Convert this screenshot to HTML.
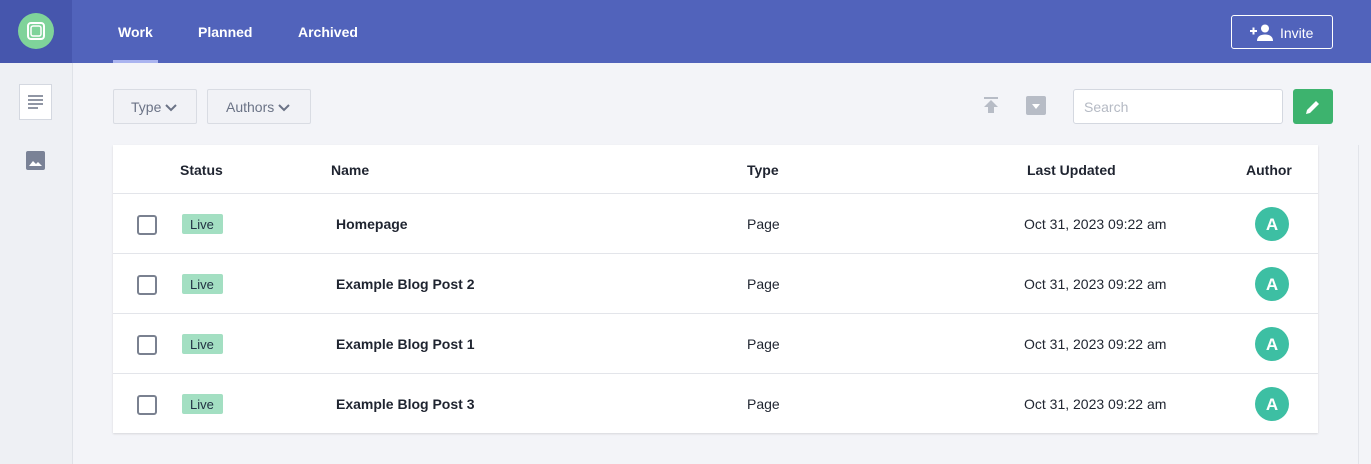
<!DOCTYPE html>
<html><head><style>
*{box-sizing:border-box;margin:0;padding:0}
body{width:1371px;height:464px;overflow:hidden;background:#f3f4f8;font-family:"Liberation Sans",sans-serif;position:relative;color:#1f2430}
.top{position:absolute;left:0;top:0;width:1371px;height:63px;background:#5163bb}
.logo{position:absolute;left:0;top:0;width:72px;height:63px;background:#4656ad}
.logo .c{position:absolute;left:18px;top:13px;width:36px;height:36px;border-radius:50%;background:#7fd39a}
.tab{position:absolute;top:24px;color:#fff;font-size:14px;font-weight:bold}
.ul{position:absolute;left:113px;top:60px;width:45px;height:3px;background:#aab4f0}
.invite{position:absolute;left:1231px;top:15px;width:102px;height:34px;border:1px solid #fff;border-radius:3px;color:#fff;font-size:14px;padding:9px 0 0 48px}
.side{position:absolute;left:0;top:63px;width:73px;height:401px;background:#eef0f4;border-right:1px solid #dfe2e8}
.doc{position:absolute;left:19px;top:84px;width:33px;height:36px;background:#fff;border:1px solid #d4d8e0}
.btn{position:absolute;top:89px;height:35px;border:1px solid #d9dce3;border-radius:2px;background:#f1f2f6;color:#6b7386;font-size:14px;padding-top:9px}
.search{position:absolute;left:1073px;top:89px;width:210px;height:35px;background:#fff;border:1px solid #d4d8e0;border-radius:3px;color:#b5bac4;font-size:14px;padding:9px 10px}
.edit{position:absolute;left:1293px;top:89px;width:40px;height:35px;background:#3db36e;border-radius:3px}
.card{position:absolute;left:113px;top:145px;width:1205px;height:288px;background:#fff;box-shadow:0 1px 2px rgba(0,0,0,.12)}
.vr{position:absolute;left:1358px;top:145px;width:1px;height:319px;background:#e2e4ea}
.th{position:absolute;top:162px;font-size:14px;font-weight:bold}
.row{position:absolute;left:113px;width:1205px;height:60px;border-top:1px solid #e3e5ea;font-size:14px}
.row span{position:absolute;top:22px}
.cb{position:absolute;left:24px;top:21px;width:20px;height:20px;border:2px solid #7a8190;border-radius:3px}
.live{position:absolute;left:69px;top:20px;width:41px;height:20px;background:#a3dfc2;border-radius:2px;font-size:13px;color:#234;padding:3px 0 0 8px}
.av{position:absolute;left:1142px;top:13px;width:34px;height:34px;border-radius:50%;background:#3dbfa3;color:#fff;font-weight:bold;font-size:17px;text-align:center;padding-top:8px}
</style></head><body>
<div class="top"></div>
<div class="logo"><div class="c"><svg width="36" height="36" viewBox="0 0 36 36"><rect x="10" y="10" width="16" height="16" rx="3" fill="none" stroke="#fff" stroke-width="2"/><rect x="13" y="13" width="10" height="10" rx="2" fill="none" stroke="#fff" stroke-width="1.5"/></svg></div></div>
<div class="tab" style="left:118px">Work</div>
<div class="tab" style="left:198px">Planned</div>
<div class="tab" style="left:298px">Archived</div>
<div class="ul"></div>
<div class="invite"><svg style="position:absolute;left:18px;top:8px" width="24" height="17" viewBox="0 0 24 17"><path d="M0 7h7M3.5 3.5v7" stroke="#fff" stroke-width="2"/><circle cx="15" cy="4.5" r="4" fill="#fff"/><path d="M7 17c0-5 4-6.5 8-6.5s8 1.5 8 6.5z" fill="#fff"/></svg>Invite</div>
<div class="side"></div>
<div class="doc"><svg width="31" height="34" viewBox="0 0 31 34"><path d="M8 11h15M8 15h15M8 19h15M8 23h10" stroke="#6b7386" stroke-width="1.6"/></svg></div>
<svg style="position:absolute;left:26px;top:151px" width="19" height="19" viewBox="0 0 19 19"><rect width="19" height="19" rx="2" fill="#7a8296"/><path d="M3 15l4-5 3 3 2-2 4 4z" fill="#fff"/></svg>
<div class="btn" style="left:113px;width:84px;padding-left:17px">Type <svg width="12" height="8" viewBox="0 0 12 8"><path d="M1 1l5 5 5-5" stroke="#6b7386" stroke-width="2" fill="none"/></svg></div>
<div class="btn" style="left:207px;width:104px;padding-left:18px">Authors <svg width="12" height="8" viewBox="0 0 12 8"><path d="M1 1l5 5 5-5" stroke="#6b7386" stroke-width="2" fill="none"/></svg></div>
<svg style="position:absolute;left:983px;top:97px" width="16" height="17" viewBox="0 0 16 17"><path d="M1 1h14" stroke="#b7bcc6" stroke-width="2"/><path d="M8 3l7 7h-4v6H5v-6H1z" fill="#b7bcc6"/></svg>
<svg style="position:absolute;left:1026px;top:96px" width="20" height="19" viewBox="0 0 20 19"><rect width="20" height="19" rx="2" fill="#b7bcc6"/><path d="M6 8h8l-4 5z" fill="#fff"/></svg>
<div class="search">Search</div>
<div class="edit"><svg style="position:absolute;left:11px;top:9px" width="18" height="18" viewBox="0 0 18 18"><path d="M2 16l1-4 9-9 3 3-9 9z" fill="#fff"/></svg></div>
<div class="card"></div>
<div class="vr"></div>
<div class="th" style="left:180px">Status</div>
<div class="th" style="left:331px">Name</div>
<div class="th" style="left:747px">Type</div>
<div class="th" style="left:1027px">Last Updated</div>
<div class="th" style="left:1246px">Author</div>
<div class="row" style="top:193px"><div class="cb"></div><div class="live">Live</div><span style="left:223px;font-weight:bold">Homepage</span><span style="left:634px">Page</span><span style="left:911px">Oct 31, 2023 09:22 am</span><div class="av">A</div></div>
<div class="row" style="top:253px"><div class="cb"></div><div class="live">Live</div><span style="left:223px;font-weight:bold">Example Blog Post 2</span><span style="left:634px">Page</span><span style="left:911px">Oct 31, 2023 09:22 am</span><div class="av">A</div></div>
<div class="row" style="top:313px"><div class="cb"></div><div class="live">Live</div><span style="left:223px;font-weight:bold">Example Blog Post 1</span><span style="left:634px">Page</span><span style="left:911px">Oct 31, 2023 09:22 am</span><div class="av">A</div></div>
<div class="row" style="top:373px"><div class="cb"></div><div class="live">Live</div><span style="left:223px;font-weight:bold">Example Blog Post 3</span><span style="left:634px">Page</span><span style="left:911px">Oct 31, 2023 09:22 am</span><div class="av">A</div></div>
</body></html>
